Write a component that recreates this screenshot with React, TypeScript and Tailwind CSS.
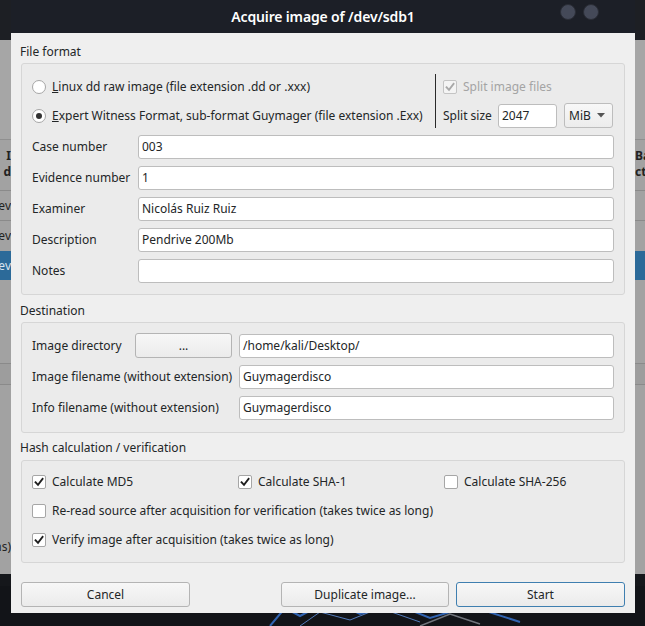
import React from "react";

const Check = ({ disabled = false }: { disabled?: boolean }) => (
  <svg width="10" height="10" viewBox="0 0 10 10" className="block">
    <path d="M1.5 5.2 L4 7.8 L8.6 1.8" fill="none" stroke={disabled ? "#a8a8a8" : "#1e1e1e"} strokeWidth="1.8" strokeLinecap="square" />
  </svg>
);

const CheckBox = ({ checked, disabled = false }: { checked: boolean; disabled?: boolean }) => (
  <div
    className={
      "w-[14px] h-[14px] flex items-center justify-center border rounded-[2px] shrink-0 " +
      (disabled ? "border-[#c4c4c4] bg-[#f4f4f4]" : "border-[#a6a6a6] bg-white")
    }
  >
    {checked && <Check disabled={disabled} />}
  </div>
);

const Radio = ({ checked }: { checked: boolean }) => (
  <div className="w-[14px] h-[14px] rounded-full border border-[#a6a6a6] bg-white flex items-center justify-center shrink-0">
    {checked && <div className="w-[6px] h-[6px] rounded-full bg-[#333]" />}
  </div>
);

const Input = ({ value, className = "" }: { value: string; className?: string }) => (
  <div className={"h-[24px] bg-white border border-[#bdbdbd] rounded-[3px] flex items-center pl-[3px] whitespace-nowrap " + className}>
    {value}
  </div>
);

const Btn = ({ label, className = "" }: { label: string; className?: string }) => (
  <div
    className={
      "h-[25px] rounded-[3px] border flex items-center justify-center bg-gradient-to-b from-[#f7f7f7] to-[#ebebeb] whitespace-nowrap " + className
    }
  >
    {label}
  </div>
);

const Strip = ({ children, className = "" }: { children?: React.ReactNode; className?: string }) => (
  <div className={"flex justify-between items-center shrink-0 overflow-hidden " + className}>{children}</div>
);

export default function App() {
  return (
    <div className="relative w-[645px] h-[626px] overflow-hidden bg-[#15171b] font-['Noto_Sans',sans-serif] text-[12px] text-[#232627] whitespace-nowrap">
      {/* desktop wallpaper streaks */}
      <svg className="absolute left-0 bottom-0" width="645" height="40" viewBox="0 0 645 40">
        <rect width="645" height="40" fill="#121418" />
        <path d="M270 40 L285 22 L300 30 L330 14 L360 28 L395 18 L430 32 L470 20 L520 36" stroke="#3a78d8" strokeWidth="2" fill="none" opacity="0.8" />
        <path d="M300 40 L320 26 L350 34 L380 22 L420 36" stroke="#6ea6ff" strokeWidth="1" fill="none" opacity="0.7" />
        <path d="M420 40 L450 28 L480 38" stroke="#cfd6e0" strokeWidth="1.5" fill="none" opacity="0.5" />
      </svg>
      {/* main window behind */}
      <div className="absolute left-0 right-0 top-0 h-[574px] bg-[#a2a2a2] flex flex-col text-[#222]">
        <div className="h-[40px] bg-[#1d1f24] shrink-0" />
        <Strip className="h-[100px] bg-[#a6a6a6] border-b border-[#8f8f8f]" />
        <Strip className="h-[50px] font-bold leading-[16px] items-start pt-[8px]">
          <div className="w-[11px] flex flex-col items-end">
            <div>I</div>
            <div>d</div>
          </div>
          <div className="w-[10px]">
            <div>Ba</div>
            <div>ct</div>
          </div>
        </Strip>
        <Strip className="h-[30px] border-t border-[#8a8a8a]">
          <div className="w-[11px] flex justify-end">dev</div>
        </Strip>
        <Strip className="h-[31px] border-t border-[#8a8a8a]">
          <div className="w-[11px] flex justify-end">dev</div>
        </Strip>
        <Strip className="h-[29px] bg-[#2c6a99] text-[#d8e4ee]">
          <div className="w-[11px] flex justify-end">dev</div>
        </Strip>
        <Strip className="h-[83px]" />
        <Strip className="h-[22px] border-t border-b border-[#8a8a8a] bg-[#9d9d9d]" />
        <div className="flex-1 flex items-end pb-[18px]">
          <div className="w-[11px] flex justify-end">options)</div>
        </div>
      </div>

      {/* dialog window */}
      <div className="absolute left-[11px] top-0 w-[624px] h-[613px] flex flex-col">
        <div className="h-[33px] shrink-0 bg-[#1c1f27] flex items-center justify-center relative">
          <div className="text-white text-[14px] font-semibold tracking-[-0.15px]">Acquire image of /dev/sdb1</div>
          <div className="absolute right-[36px] top-[4px] flex gap-[7px]">
            <div className="w-[16px] h-[16px] rounded-full bg-[#444958] border border-[#2a2d36]" />
            <div className="w-[16px] h-[16px] rounded-full bg-[#444958] border border-[#2a2d36]" />
          </div>
        </div>
        <div className="flex-1 bg-[#efefef] px-[10px] pt-[10px] flex flex-col">
          {/* File format */}
          <div className="h-[18px] leading-[18px] -ml-[1px]">File format</div>
          <div className="mt-[2px] border border-[#d6d6d6] rounded-[3px] bg-[#ebebeb] pt-[8px] pl-[10px] pr-[10px] pb-[11px]">
            <div className="flex h-[58px]">
              <div className="w-[403px] flex flex-col">
                <div className="h-[29px] flex items-center gap-[6px]">
                  <Radio checked={false} />
                  <span>
                    <span className="underline">L</span>inux dd raw image (file extension .dd or .xxx)
                  </span>
                </div>
                <div className="h-[29px] flex items-center gap-[6px]">
                  <Radio checked={true} />
                  <span>
                    <span className="underline">E</span>xpert Witness Format, sub-format Guymager (file extension .Exx)
                  </span>
                </div>
              </div>
              <div className="w-[1px] bg-[#2a2a2a] mt-[2px] mb-[2px]" />
              <div className="flex-1 pl-[7px] flex flex-col">
                <div className="h-[29px] flex items-center gap-[6px] text-[#a4a4a4]">
                  <CheckBox checked={true} disabled />
                  <span>Split image files</span>
                </div>
                <div className="h-[25px] mt-[2px] flex items-center">
                  <span className="w-[55px]">Split size</span>
                  <Input value="2047" className="w-[59px]" />
                  <div className="ml-[7px] w-[49px] h-[25px] rounded-[3px] border border-[#bdbdbd] bg-gradient-to-b from-[#f8f8f8] to-[#ececec] flex items-center pl-[4px] justify-between pr-[7px]">
                    <span>MiB</span>
                    <svg width="8" height="5" viewBox="0 0 8 5">
                      <path d="M0 0 L8 0 L4 4.5 Z" fill="#555" />
                    </svg>
                  </div>
                </div>
              </div>
            </div>
            <div className="mt-[5px] flex flex-col gap-[7px]">
              {[
                ["Case number", "003"],
                ["Evidence number", "1"],
                ["Examiner", "Nicolás Ruiz Ruiz"],
                ["Description", "Pendrive 200Mb"],
                ["Notes", ""],
              ].map(([l, v]) => (
                <div key={l} className="flex items-center">
                  <div className="w-[106px] shrink-0">{l}</div>
                  <Input value={v} className="flex-1" />
                </div>
              ))}
            </div>
          </div>

          {/* Destination */}
          <div className="mt-[7px] h-[18px] leading-[18px] -ml-[1px]">Destination</div>
          <div className="mt-[2px] border border-[#d6d6d6] rounded-[3px] bg-[#ebebeb] pt-[10px] pl-[10px] pr-[10px] pb-[12px] flex flex-col gap-[7px]">
            <div className="flex items-center">
              <div className="w-[103px] shrink-0">Image directory</div>
              <Btn label="..." className="w-[97px] h-[24px] border-[#b4b4b4] shrink-0" />
              <Input value="/home/kali/Desktop/" className="ml-[7px] flex-1" />
            </div>
            <div className="flex items-center">
              <div className="w-[207px] shrink-0">Image filename (without extension)</div>
              <Input value="Guymagerdisco" className="flex-1" />
            </div>
            <div className="flex items-center">
              <div className="w-[207px] shrink-0">Info filename (without extension)</div>
              <Input value="Guymagerdisco" className="flex-1" />
            </div>
          </div>

          {/* Hash */}
          <div className="mt-[6px] h-[18px] leading-[18px] -ml-[1px]">Hash calculation / verification</div>
          <div className="mt-[3px] border border-[#d6d6d6] rounded-[3px] bg-[#ebebeb] pt-[10px] pl-[10px] pr-[10px] pb-[11px] flex flex-col gap-[7px]">
            <div className="grid grid-cols-[206px_206px_1fr] h-[22px] items-center">
              <div className="flex items-center gap-[6px]">
                <CheckBox checked />
                <span>Calculate MD5</span>
              </div>
              <div className="flex items-center gap-[6px]">
                <CheckBox checked />
                <span>Calculate SHA-1</span>
              </div>
              <div className="flex items-center gap-[6px]">
                <CheckBox checked={false} />
                <span>Calculate SHA-256</span>
              </div>
            </div>
            <div className="h-[22px] flex items-center gap-[6px]">
              <CheckBox checked={false} />
              <span>Re-read source after acquisition for verification (takes twice as long)</span>
            </div>
            <div className="h-[22px] flex items-center gap-[6px]">
              <CheckBox checked />
              <span>Verify image after acquisition (takes twice as long)</span>
            </div>
          </div>

          {/* Buttons */}
          <div className="mt-[19px] flex items-center">
            <Btn label="Cancel" className="w-[169px] border-[#b4b4b4]" />
            <div className="flex-1" />
            <Btn label="Duplicate image..." className="w-[168px] border-[#b4b4b4]" />
            <Btn label="Start" className="ml-[7px] w-[169px] border-[#3f7fb0] from-[#f2f5f8] to-[#e3e8ee]" />
          </div>
        </div>
      </div>
    </div>
  );
}
